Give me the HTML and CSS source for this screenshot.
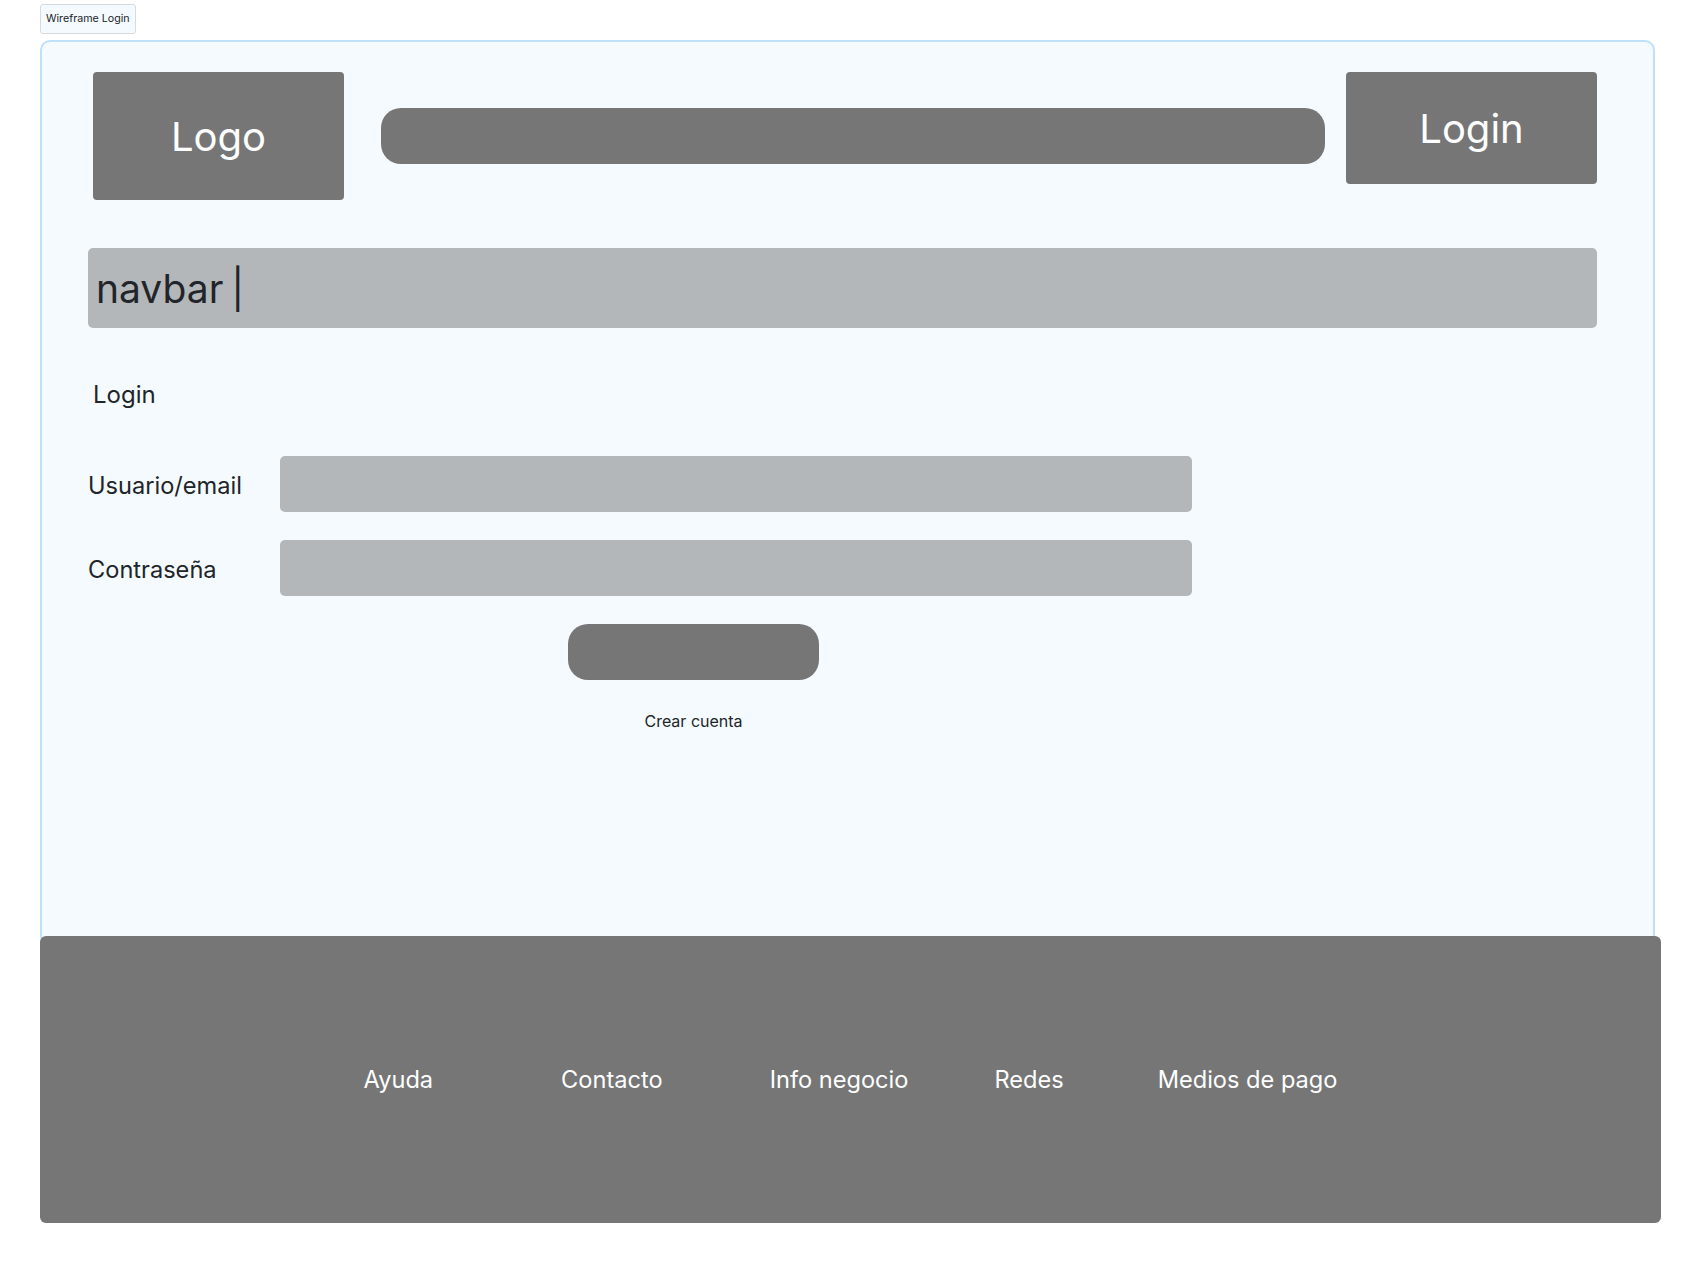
FILE: index.html
```html
<!DOCTYPE html>
<html lang="es">
<head>
<meta charset="utf-8">
<title>Wireframe Login</title>
<link rel="stylesheet" href="styles.css">
</head>
<body>
<div class="tag">Wireframe Login</div>
<div class="frame">
  <header class="top">
    <div class="logo">Logo</div>
    <div class="search"></div>
    <div class="login-btn">Login</div>
  </header>
  <nav class="navbar">navbar |</nav>
  <main class="login">
    <h2 class="title">Login</h2>
    <div class="row">
      <label class="label">Usuario/email</label>
      <div class="field"></div>
    </div>
    <div class="row">
      <label class="label">Contraseña</label>
      <div class="field"></div>
    </div>
    <div class="submit"></div>
    <div class="create">Crear cuenta</div>
  </main>
</div>
<footer class="footer">
  <span class="f-item">Ayuda</span>
  <span class="f-item">Contacto</span>
  <span class="f-item">Info negocio</span>
  <span class="f-item">Redes</span>
  <span class="f-item">Medios de pago</span>
</footer>
</body>
</html>
```
FILE: styles.css
```css
* { box-sizing: border-box; }
html, body { margin: 0; background: #ffffff; }
body {
  padding: 4px 0 0 40px;
  font-family: Inter, "Noto Sans", sans-serif;
  color: #212529;
}
.tag {
  display: inline-block;
  height: 30px;
  padding: 0 5px;
  border: 1px solid #d6dadd;
  border-radius: 3px;
  background: #f5faff;
  font-size: 10.7px;
  line-height: 28px;
  vertical-align: top;
}
.frame {
  margin-top: 6px;
  width: 1615px;
  height: 906px;
  border: 2px solid #bfe0fb;
  border-radius: 10px;
  background: #f5faff;
  padding: 30px 56px 0 46px;
}
.top {
  display: flex;
  align-items: center;
  height: 128px;
}
.logo {
  margin-left: 5px;
  width: 251px;
  height: 128px;
  border-radius: 4px;
  background: #767676;
  color: #fff;
  font-size: 40px;
  display: flex;
  align-items: center;
  justify-content: center;
}
.search {
  margin-left: 37px;
  width: 944px;
  height: 56px;
  border-radius: 20px;
  background: #767676;
}
.login-btn {
  align-self: flex-start;
  margin-left: 21px;
  width: 251px;
  height: 112px;
  border-radius: 4px;
  background: #767676;
  color: #fff;
  font-size: 40px;
  display: flex;
  align-items: center;
  justify-content: center;
}
.navbar {
  margin-top: 48px;
  height: 80px;
  border-radius: 5px;
  background: #b4b7b9;
  padding-left: 8px;
  display: flex;
  align-items: center;
  font-size: 39px;
  word-spacing: -3px;
  color: #212529;
}
.title {
  margin: 52px 0 0;
  padding-left: 5px;
  font-size: 24px;
  font-weight: 400;
  line-height: 30px;
}
.row {
  display: flex;
  align-items: center;
  margin-top: 46px;
}
.row + .row { margin-top: 28px; }
.label {
  width: 192px;
  font-size: 23.6px;
  line-height: 30px;
  padding-top: 4px;
}
.field {
  width: 912px;
  height: 56px;
  border-radius: 5px;
  background: #b4b7b9;
}
.submit {
  margin: 28px 0 0 480px;
  width: 251px;
  height: 56px;
  border-radius: 20px;
  background: #767676;
}
.create {
  margin: 31px 0 0 480px;
  width: 251px;
  text-align: center;
  font-size: 16px;
  line-height: 20px;
}
.footer {
  position: relative;
  margin-top: -10px;
  width: 1621px;
  height: 287px;
  border-radius: 6px;
  background: #767676;
  color: #fff;
  font-size: 23.6px;
  display: flex;
  align-items: center;
  justify-content: center;
}
.f-item:nth-child(2) { margin-left: 128px; }
.f-item:nth-child(3) { margin-left: 107px; }
.f-item:nth-child(4) { margin-left: 86px; }
.f-item:nth-child(5) { margin-left: 94px; }
```
